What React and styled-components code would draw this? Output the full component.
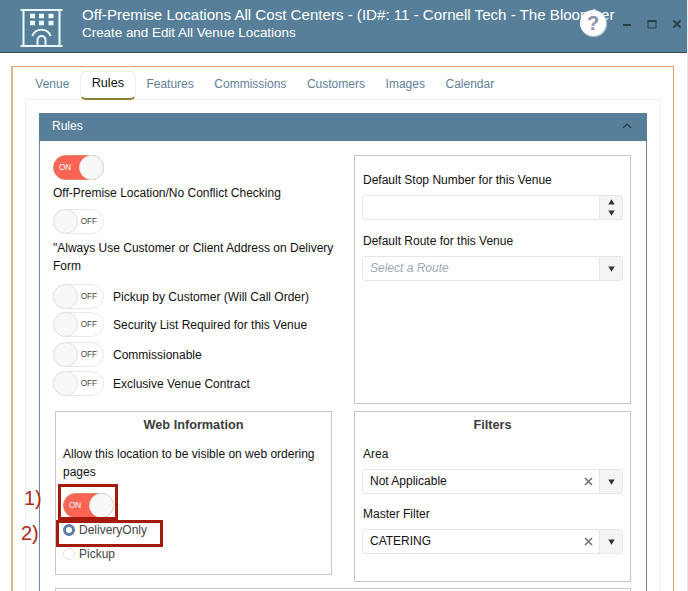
import React, { useState } from 'react'
import styled, { createGlobalStyle } from 'styled-components'

const GlobalStyle = createGlobalStyle`
  * {
    box-sizing: border-box;
  }
  body {
    margin: 0;
    background: #fff;
    font-family: "Liberation Sans", Arial, sans-serif;
    font-size: 12px;
    color: #111;
  }
`
const Window = styled.div`
  position: relative;
  width: 688px;
  height: 591px;
  overflow: hidden;
  border-right: 1px solid #e9ebed;
`
const TitleBar = styled.header`
  display: flex;
  width: 688px;
  height: 53px;
  padding-left: 20px;
  background: #587f9a;
  border-bottom: 1px solid #34495c;
`
const BuildingIcon = styled.svg`
  width: 43px;
  height: 40px;
  margin-top: 8px;
  flex: none;
`
const Titles = styled.div`
  width: 535px;
  margin-left: 19px;
  padding-top: 6px;
  white-space: nowrap;
  color: #fff;
`
const Title = styled.div`
  font-size: 15.1px;
  line-height: 18px;
`
const Subtitle = styled.div`
  font-size: 13.4px;
  line-height: 17px;
`
const WindowButtons = styled.div`
  display: flex;
  align-items: center;
  gap: 15px;
  height: 48px;
  margin-left: 5px;
`
const HelpBadge = styled.div`
  position: absolute;
  left: 580px;
  top: 10px;
  width: 26px;
  height: 26px;
  border-radius: 50%;
  background: #fff;
  color: #8c93a8;
  font-size: 20px;
  font-weight: bold;
  line-height: 27px;
  text-align: center;
  box-shadow: 1px 1px 1px #b9cad6;
`
const Frame = styled.main`
  width: 663px;
  height: 560px;
  margin: 13px 0 0 11px;
  padding: 4px 12px 0 12px;
  border: 1px solid #df9f6c;
  border-left: 2px solid #e3b58d;
`
const Tabs = styled.nav`
  display: flex;
  height: 29px;
`
const Tab = styled.button`
  height: ${p => (p.$active ? '29px' : '24px')};
  padding: ${p => (p.$active ? '0 11px 5px 11px' : '0 9.3px')};
  border: 1px solid ${p => (p.$active ? '#ececec' : 'transparent')};
  border-bottom: ${p => (p.$active ? '2px solid #8b8130' : '0')};
  border-radius: 6px;
  background: #fff;
  color: ${p => (p.$active ? '#111' : '#62809a')};
  font-family: inherit;
  font-size: ${p => (p.$active ? '12.7px' : '12px')};
`
const TabPage = styled.section`
  height: 520px;
  margin-top: -1px;
  padding: 13px 13px 0 13px;
  border: 1px solid #efefef;
`
const Panel = styled.div`
  width: 608px;
  height: 520px;
  border: 1px solid #6d8ba8;
`
const PanelHeader = styled.div`
  display: flex;
  justify-content: space-between;
  align-items: center;
  height: 28px;
  margin: -1px -1px 0 -1px;
  padding: 0 15px 2px 13px;
  background: #587f9a;
  color: #fff;
`
const Columns = styled.div`
  display: flex;
  justify-content: space-between;
  padding: ${p => p.$top}px 15px 0 ${p => p.$left}px;
`
const Options = styled.div`
  width: 284px;
`
const Paragraph = styled.p`
  margin: 0;
  padding: ${p => p.$pad || '0'};
  line-height: 18px;
`
const ToggleRow = styled.div`
  display: flex;
  align-items: center;
  gap: 9px;
  height: 25px;
  line-height: 12px;
  margin-bottom: ${p => p.$gap || 0}px;
`
const Switch = styled.button`
  display: flex;
  flex-direction: ${p => (p.$on ? 'row' : 'row-reverse')};
  align-items: center;
  justify-content: space-between;
  width: 51px;
  height: 25px;
  padding: 0;
  border: 1px solid ${p => (p.$on ? '#d98b68' : '#e8e8e8')};
  border-radius: 13px;
  background: ${p => (p.$on ? '#fb6354' : '#fff')};
  color: ${p => (p.$on ? '#fff' : '#444')};
  font-family: inherit;
  font-size: 8.2px;
`
const SwitchText = styled.span`
  padding: ${p => (p.$on ? '0 0 0 5px' : '0 6px 0 0')};
`
const Knob = styled.span`
  width: 25px;
  height: 25px;
  margin: -1px;
  border: 1px solid #e2e0e0;
  border-radius: 50%;
  background: #f9f8f8;
`
const Box = styled.div`
  width: 277px;
  height: ${p => p.$height}px;
  padding: 0 ${p => p.$pad || 8}px;
  border: 1px solid #c4c6c8;
`
const BoxTitle = styled.h3`
  margin: 0;
  padding-top: 4px;
  font-size: 12.7px;
  line-height: 18px;
  text-align: center;
  color: #3c3c3c;
`
const Label = styled.label`
  display: block;
  height: 18px;
  margin-top: ${p => p.$top}px;
  line-height: 18px;
`
const Field = styled.div`
  display: flex;
  width: 261px;
  height: 25px;
  margin-top: 6px;
  margin-left: -1px;
  border: 1px solid #e6e6e6;
  border-radius: 3px;
  overflow: hidden;
`
const FieldText = styled.span`
  flex: 1;
  padding-left: 7px;
  line-height: 23px;
  color: ${p => (p.$placeholder ? '#9ca8b5' : '#111')};
  font-style: ${p => (p.$placeholder ? 'italic' : 'normal')};
`
const ClearIcon = styled.svg`
  width: 9px;
  height: 9px;
  margin: 7px 6px 0 0;
`
const FieldButton = styled.span`
  display: flex;
  flex-direction: column;
  align-items: center;
  justify-content: center;
  gap: 5px;
  width: 23px;
  border-left: 1px solid #e6e6e6;
  background: #f4f4f4;
`
const RadioRow = styled.div`
  display: flex;
  align-items: center;
  gap: 4px;
  height: 24px;
  color: #444;
`
const Radio = styled.span`
  width: 12px;
  height: 12px;
  border: ${p => (p.$checked ? '3px solid #587fa0' : '1px solid #e4e4e4')};
  border-radius: 50%;
  background: #fff;
`
const NextBox = styled.div`
  height: 30px;
  margin: 6px 15px 0 15px;
  border: 1px solid #c4c6c8;
`
const Mark = styled.div`
  position: absolute;
  left: ${p => p.$x}px;
  top: ${p => p.$y}px;
  width: ${p => p.$w}px;
  height: ${p => p.$h}px;
  border: 3px solid #a51b0b;
  pointer-events: none;
`
const MarkNumber = styled.span`
  position: absolute;
  left: ${p => p.$x}px;
  top: ${p => p.$y}px;
  color: #ae2914;
  font-size: 20px;
  line-height: 22px;
`

const tabs = ['Venue', 'Rules', 'Features', 'Commissions', 'Customers', 'Images', 'Calendar']

const rules = [
  { text: 'Pickup by Customer (Will Call Order)', gap: 3 },
  { text: 'Security List Required for this Venue', gap: 5 },
  { text: 'Commissionable', gap: 4 },
  { text: 'Exclusive Venue Contract', gap: 0 }
]

const Toggle = ({ initial }) => {
  const [on, setOn] = useState(initial)
  return (
    <Switch $on={on} onClick={() => setOn(!on)}>
      <SwitchText $on={on}>{on ? 'ON' : 'OFF'}</SwitchText>
      <Knob />
    </Switch>
  )
}

const Arrow = ({ up }) => (
  <svg width="7" height="6" viewBox="0 0 7 6">
    <path d={up ? 'M0.3 5.5 3.5 0.3 6.7 5.5z' : 'M0.3 0.5 3.5 5.7 6.7 0.5z'} fill="#333" />
  </svg>
)

const Select = ({ value, placeholder }) => (
  <Field>
    <FieldText $placeholder={!value}>{value || placeholder}</FieldText>
    {value && (
      <ClearIcon viewBox="0 0 9 9">
        <path d="M1 1l7 7M8 1l-7 7" stroke="#777" strokeWidth="1.7" />
      </ClearIcon>
    )}
    <FieldButton><Arrow /></FieldButton>
  </Field>
)

const Header = () => (
  <TitleBar>
    <BuildingIcon viewBox="0 0 43 40" fill="none" stroke="#eaffff" strokeWidth="2">
      <path d="M0.5 2h42M0.5 38h42M3.5 2v36M39.5 2v36" />
      <path d="M12.5 28C14.5 19.5 28.5 19.5 30.5 28" />
      <path d="M17.5 38v-6a4 4 0 0 1 8 0v6" />
      <path d="M10 8h5M19 8h5M28.5 8h5M10 15h5M19 15h5M28.5 15h5" strokeWidth="4.5" />
    </BuildingIcon>
    <Titles>
      <Title>Off-Premise Locations All Cost Centers - (ID#: 11 - Cornell Tech - The Bloomber</Title>
      <Subtitle>Create and Edit All Venue Locations</Subtitle>
    </Titles>
    <WindowButtons>
      <svg width="10" height="10" stroke="#283f45" strokeWidth="2"><path d="M1 6h8" /></svg>
      <svg width="10" height="10" fill="none" stroke="#283f45"><path d="M1 1.5h8v7.5h-8z" /><path d="M0.5 2h9" strokeWidth="2" /></svg>
      <svg width="10" height="10" stroke="#283f45" strokeWidth="1.8"><path d="M1.5 1.5l7 7M8.5 1.5l-7 7" /></svg>
    </WindowButtons>
    <HelpBadge>?</HelpBadge>
  </TitleBar>
)

const App = () => {
  const [tab, setTab] = useState('Rules')
  return (
    <Window>
      <GlobalStyle />
      <Header />
      <Frame>
        <Tabs>
          {tabs.map(t => (
            <Tab key={t} $active={t === tab} onClick={() => setTab(t)}>{t}</Tab>
          ))}
        </Tabs>
        <TabPage>
          <Panel>
            <PanelHeader>
              Rules
              <svg width="10" height="6" fill="none" stroke="#24414f" strokeWidth="1.2"><path d="M1 5l4-4 4 4" /></svg>
            </PanelHeader>

            <Columns $top={14} $left={13}>
              <Options>
                <Toggle initial={true} />
                <Paragraph $pad="4px 0 7px 0">Off-Premise Location/No Conflict Checking</Paragraph>
                <Toggle initial={false} />
                <Paragraph $pad="5px 0 9px 0">"Always Use Customer or Client Address on Delivery Form</Paragraph>
                {rules.map(r => (
                  <ToggleRow key={r.text} $gap={r.gap}>
                    <Toggle initial={false} />
                    {r.text}
                  </ToggleRow>
                ))}
              </Options>
              <Box $height={249}>
                <Label $top={15}>Default Stop Number for this Venue</Label>
                <Field>
                  <FieldText />
                  <FieldButton><Arrow up /><Arrow /></FieldButton>
                </Field>
                <Label $top={12}>Default Route for this Venue</Label>
                <Select placeholder="Select a Route" />
              </Box>
            </Columns>

            <Columns $top={7} $left={15}>
              <Box $height={164} $pad={7}>
                <BoxTitle>Web Information</BoxTitle>
                <Paragraph $pad="11px 0 12px 0">Allow this location to be visible on web ordering pages</Paragraph>
                <Toggle initial={true} />
                <RadioRow><Radio $checked />DeliveryOnly</RadioRow>
                <RadioRow><Radio />Pickup</RadioRow>
              </Box>
              <Box $height={171}>
                <BoxTitle>Filters</BoxTitle>
                <Label $top={11}>Area</Label>
                <Select value="Not Applicable" />
                <Label $top={11}>Master Filter</Label>
                <Select value="CATERING" />
              </Box>
            </Columns>
            <NextBox />
          </Panel>
        </TabPage>
      </Frame>

      {/* numbered steps over the web settings */}
      <MarkNumber $x={24} $y={487}>1)</MarkNumber>
      <Mark $x={58} $y={484} $w={60} $h={36} />
      <MarkNumber $x={21} $y={522}>2)</MarkNumber>
      <Mark $x={56} $y={520} $w={107} $h={27} />
    </Window>
  )
}

export default App
